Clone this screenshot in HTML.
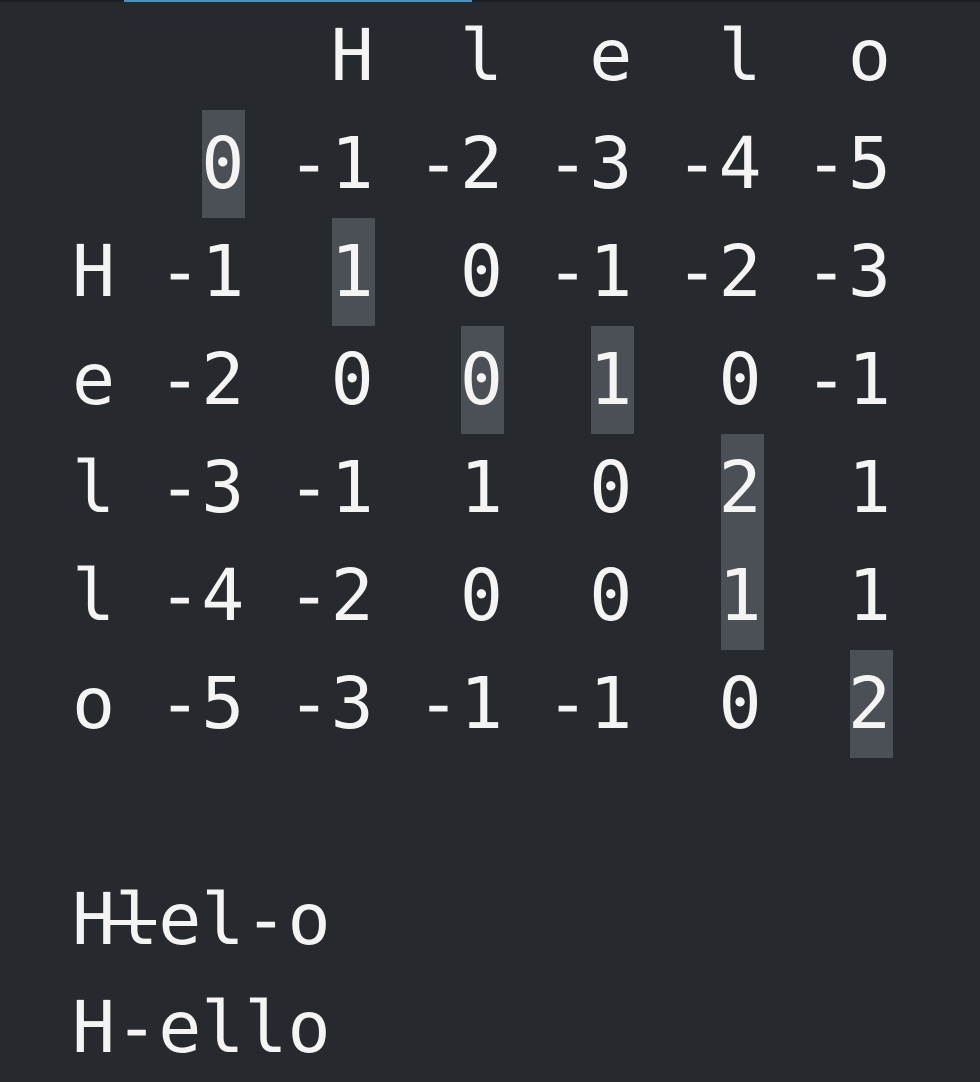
<!DOCTYPE html>
<html><head><style>
html,body{margin:0;padding:0;}
body{width:980px;height:1068px;background:#262a2e;overflow:hidden;position:relative;}
.bar{position:absolute;top:0;left:0;width:980px;height:2px;background:#1d2023;}
.blue{position:absolute;top:0;left:124px;width:348px;height:2px;background:#4b93bb;}
.hl{position:absolute;width:43px;height:108px;background:#4b5056;}
pre{position:absolute;left:72px;top:2px;margin:0;font-family:"DejaVu Sans Mono","Liberation Mono",monospace;font-size:71.6px;line-height:108px;color:#f4f4f4;}
.s{position:relative;}
.s::after{content:"";position:absolute;left:-10px;right:2px;top:50%;height:5px;background:#f4f4f4;}
</style></head><body>
<div class="bar"></div><div class="blue"></div>
<div class="hl" style="left:202px;top:110px"></div>
<div class="hl" style="left:332px;top:218px"></div>
<div class="hl" style="left:461px;top:326px"></div>
<div class="hl" style="left:591px;top:326px"></div>
<div class="hl" style="left:721px;top:434px;height:216px"></div>
<div class="hl" style="left:850px;top:650px"></div>
<pre>      H  l  e  l  o
   0 -1 -2 -3 -4 -5
H -1  1  0 -1 -2 -3
e -2  0  0  1  0 -1
l -3 -1  1  0  2  1
l -4 -2  0  0  1  1
o -5 -3 -1 -1  0  2

H<span class="s">l</span>el-o
H-ello</pre>
</body></html>
